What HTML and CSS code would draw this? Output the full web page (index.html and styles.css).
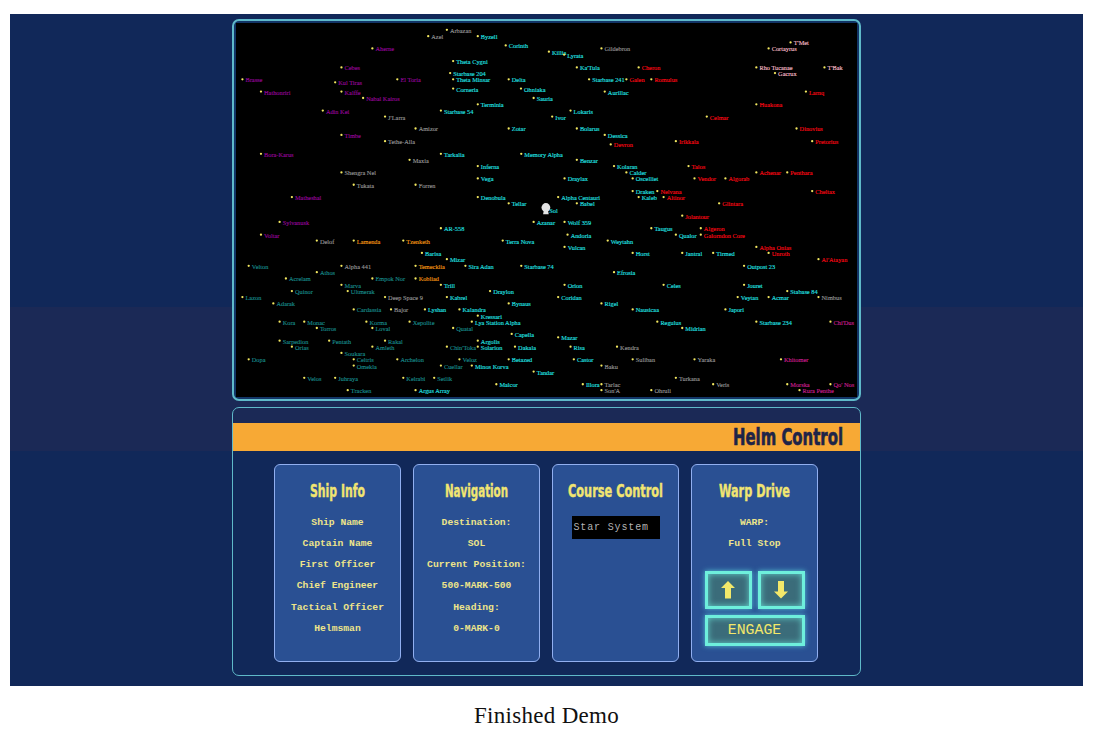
FILE: index.html
```
<!DOCTYPE html>
<html lang="en">
<head>
<meta charset="utf-8">
<title>Helm Control</title>
<link rel="stylesheet" href="styles.css">
</head>
<body>
<figure class="figure">
  <div class="screen">
    <section class="panel panel-map">
      <svg class="map" id="map" viewBox="236 23 622 375"></svg>
    </section>
    <section class="panel panel-helm">
      <header class="bar">
        <svg class="bar-title" width="116" height="28"><text x="3" y="22" textLength="110" lengthAdjust="spacingAndGlyphs">Helm Control</text></svg>
      </header>
      <div class="cards">
        <article class="card">
          <svg class="card-title" width="110" height="28"><text x="27" y="20" textLength="55" lengthAdjust="spacingAndGlyphs">Ship Info</text></svg>
          <p>Ship Name</p><p>Captain Name</p><p>First Officer</p><p>Chief Engineer</p><p>Tactical Officer</p><p>Helmsman</p>
        </article>
        <article class="card">
          <svg class="card-title" width="110" height="28"><text x="23" y="20" textLength="63" lengthAdjust="spacingAndGlyphs">Navigation</text></svg>
          <p>Destination:</p><p>SOL</p><p>Current Position:</p><p>500-MARK-500</p><p>Heading:</p><p>0-MARK-0</p>
        </article>
        <article class="card">
          <svg class="card-title" width="110" height="28"><text x="7" y="20" textLength="95" lengthAdjust="spacingAndGlyphs">Course Control</text></svg>
          <div class="field">Star System</div>
        </article>
        <article class="card">
          <svg class="card-title" width="110" height="28"><text x="19" y="20" textLength="71" lengthAdjust="spacingAndGlyphs">Warp Drive</text></svg>
          <p>WARP:</p><p>Full Stop</p>
          <div class="controls">
            <div class="key"><svg width="14" height="18" viewBox="0 0 14 18"><path d="M7 0L14 7H10V17.5H4V7H0Z"/></svg></div>
            <div class="key"><svg width="14" height="18" viewBox="0 0 14 18"><path d="M7 17.5L14 10.5H10V0H4V10.5H0Z"/></svg></div>
            <div class="key engage">ENGAGE</div>
          </div>
        </article>
      </div>
    </section>
  </div>
  <figcaption class="caption">Finished Demo</figcaption>
</figure>
<script src="map.js"></script>
</body>
</html>
```
FILE: styles.css
```
body { margin: 0; background: #fff; }
.figure { margin: 0; padding: 14px 11px 0 10px; }
.screen {
  box-sizing: border-box; height: 672px; padding-top: 5px;
  display: flex; flex-direction: column; align-items: center; gap: 6px;
  background: linear-gradient(#112859 0 293px, #1b2956 293px 437px, #112859 437px);
}
.panel { box-sizing: border-box; width: 629px; border: 2px solid #5fb9c9; border-radius: 7px; }
.panel-map { height: 382px; padding: 2px; background: #123466; }
.map { display: block; width: 621px; height: 374px; background: #000; }
.map text { font-family: "Liberation Serif", serif; font-size: 6.35px; stroke-width: .12px; }
.dot { fill: #f3e860; }
.c { fill: #22e4e6; stroke: #22e4e6; }
.t { fill: #178c8c; stroke: #178c8c; }
.p { fill: #98059c; stroke: #98059c; }
.r { fill: #ff0814; stroke: #ff0814; }
.g { fill: #979797; stroke: #979797; }
.o { fill: #f79a13; stroke: #f79a13; }
.k { fill: #f8bdca; stroke: #f8bdca; }
.m { fill: #cf1e92; stroke: #cf1e92; }
.ship { fill: #e4e4e4; }
.panel-helm { height: 269px; padding-top: 15px; border-width: 1.5px; }
.bar { height: 28px; background: #f7a935; display: flex; justify-content: flex-end; padding-right: 14px; }
.bar-title text { font: bold 23px "DejaVu Sans Condensed", "DejaVu Sans", sans-serif; fill: #1e2448; stroke: #1e2448; stroke-width: .6px; }
.cards { display: flex; justify-content: center; gap: 12px; padding: 13px 1px 0 0; }
.card {
  box-sizing: border-box; width: 127px; height: 198px; padding-top: 12px;
  display: flex; flex-direction: column; align-items: center;
  background: #2a5093; border: 1.5px solid #91aff0; border-radius: 6px;
  color: #eee58a; font: bold 9.7px/21.15px "Courier New", "Liberation Mono", monospace;
}
.card p { margin: 0; }
.card-title { margin-bottom: 7px; flex: none; overflow: visible; }
.card-title text { font: bold 18.5px "DejaVu Sans Condensed", "DejaVu Sans", sans-serif; fill: #f1e571; stroke: #f1e571; stroke-width: .4px; }
.field {
  box-sizing: border-box; width: 88px; height: 23px; margin-top: 4px; padding-left: 2px;
  background: #000; color: #b4b4b4; font-weight: normal; font-size: 10px; line-height: 24px; letter-spacing: .85px;
}
.controls { display: grid; grid-template-columns: 47px 47px; gap: 6px; margin-top: 17px; }
.key {
  box-sizing: border-box; height: 38px; display: flex; align-items: center; justify-content: center;
  background: #3b6c7a; border: 3.5px solid #6eefdc; box-shadow: 0 0 5px #55c5d4, inset 0 0 6px #62cfc9;
}
.key path { fill: #f3e86a; }
.engage { grid-column: 1 / 3; height: 31px; font-size: 14.8px; font-weight: normal; color: #f3e86a; }
.caption { text-align: center; padding-top: 15px; font: 23px/30px "Liberation Serif", serif; letter-spacing: .3px; color: #111; }
```
FILE: map.js
```
// Star systems: class of the owning faction, then x, y, name
const systems = {
  g: [[428,35.7,"Azel"],[446.7,29.3,"Arbazan"],[601.7,48,"Gildebron"],[384.7,116.3,"J'Larra"],[415.3,128.3,"Amizor"],[384.7,141,"Tethe-Alla"],
    [409.3,159.7,"Maxia"],[341,172.3,"Shengra Nel"],[353.3,184.7,"Tukata"],[415.3,184.7,"Forren"],[316.3,240.7,"Delof"],[341,266,"Alpha 441"],
    [384.7,297.3,"Deep Space 9"],[390.7,309.7,"Bajor"],[617.3,347,"Kendra"],[633,359.7,"Suliban"],[601.7,366,"Baku"],[601.7,384.7,"Tarlac"],
    [601.7,390.7,"Son'A"],[651.7,390.7,"Ohruli"],[819.3,297.3,"Nimbus"],[695,359.7,"Yaraka"],[676.3,378.3,"Turkana"],[713.7,384.7,"Veris"]],
  p: [[372,48,"Aherne"],[341,67,"Cebes"],[241.7,79,"Brasse"],[334.7,82,"Kul Tiras"],[397,79,"El Toria"],[260.3,91.3,"Hathonriri"],[341,91.3,"Kalffe"],
    [362.7,97.7,"Nabal Kairos"],[322.3,110.3,"Adin Kei"],[341,134.7,"Timbe"],[260.3,153.7,"Bora-Karus"],[291.3,197,"Matheshal"],
    [279,222,"Sylvanusk"],[260.3,234.7,"Voltar"]],
  c: [[477.7,35.7,"Byzell"],[505.7,45,"Corinth"],[549,51.3,"Killia"],[564.3,54.3,"Lyrata"],[453,60.7,"Theta Cygni"],[450,72.7,"Starbase 204"],
    [453,79,"Theta Minsar"],[508.7,79,"Delta"],[453,88.3,"Corneria"],[521,88.3,"Ohniaka"],[577,67,"Ka'Tula"],[589.3,79,"Starbase 241"],
    [605,91.3,"Aurillac"],[533.7,97.7,"Sauria"],[477.7,104,"Terminia"],[440.7,110.3,"Starbase 54"],[570.7,110.3,"Lokaris"],[552.3,116.3,"Ivor"],
    [508.7,128.3,"Zotar"],[577,128.3,"Bolarus"],[605,134.7,"Dessica"],[440.7,153.7,"Tarkalia"],[521.3,153.7,"Memory Alpha"],[577,159.7,"Benzar"],
    [477.7,166,"Inferna"],[477.7,178.3,"Vega"],[564.7,178.3,"Draylax"],[614.3,166,"Kolaran"],[626.7,172.3,"Calder"],[633,178.3,"Oscelliet"],
    [477.7,197,"Denobula"],[508.7,203.3,"Tellar"],[558.3,197,"Alpha Centauri"],[577,203.3,"Babel"],[633,191,"Draken"],[639,197,"Kaleb"],
    [546.3,209.6,"Sol"],[533.7,222,"Azanar"],[564.7,222,"Wolf 359"],[567.7,234.7,"Andoria"],[440.7,228.3,"AR-558"],[502.7,240.7,"Terra Nova"],
    [564.7,247,"Vulcan"],[608,240.7,"Weytahn"],[633,253,"Horst"],[421.7,253,"Barisa"],[446.7,259.3,"Mizar"],[465.3,266,"Sira Adan"],
    [521.3,266,"Starbase 74"],[651.7,228.3,"Taugus"],[676.3,234.7,"Qualor"],[682.7,253,"Jantral"],[713.7,253,"Tirmed"],[744.7,266,"Outpost 23"],
    [440.7,285,"Trill"],[424.7,309.7,"Lyshan"],[415.3,390.7,"Argus Array"],[614.3,272.3,"Efrosia"],[564.7,285,"Orion"],[490,291.3,"Draylon"],
    [446.7,297.3,"Kabrel"],[558.3,297.3,"Coridan"],[508.7,303.7,"Bynaus"],[601.7,303.7,"Rigel"],[459.3,309.7,"Kalandra"],[633,309.7,"Nausicaa"],
    [477.7,316,"Kressari"],[471.7,322,"Lya Station Alpha"],[511.7,334.3,"Capella"],[558.3,337.7,"Mazar"],[477.7,341,"Argolis"],
    [477.7,347,"Solarion"],[515,347,"Dakala"],[570.7,347,"Risa"],[508.7,359.7,"Betazed"],[574,359.7,"Castor"],[471.7,366,"Minos Korva"],
    [533.7,372,"Tandar"],[496.3,384.7,"Malcor"],[583,384.7,"Illora"],[664,285,"Celes"],[744.7,285,"Jouret"],[788,291.3,"Stabase 84"],
    [738.3,297.3,"Veytan"],[769.3,297.3,"Acmar"],[726,309.7,"Japori"],[657.7,322,"Regulus"],[757,322,"Starbase 234"],[682.7,328.3,"Midrian"]],
  r: [[639,67,"Cheron"],[626.7,79,"Galen"],[651.7,79,"Romulus"],[806.7,91.3,"Larnq"],[757,104,"Huakona"],[707.3,116.3,"Celmar"],
    [797.3,128.3,"Dinovius"],[676.3,141,"Irikkala"],[813,141,"Pretorius"],[611,144.3,"Devron"],[689,166,"Talos"],[695,178.3,"Vendor"],
    [726,178.3,"Algorab"],[757,172.3,"Achenar"],[788,172.3,"Penthara"],[657.7,191,"Nelvana"],[664,197,"Altinor"],[813,191,"Cheltax"],
    [719.7,203.3,"Glintara"],[682.7,215.7,"Jolantour"],[701.3,228.3,"Algeron"],[701.3,234.7,"Galorndon Core"],[757,247,"Alpha Onias"],
    [769.3,253,"Unroth"],[819.3,259.3,"Al'Atayan"]],
  k: [[791.3,42,"T'Met"],[769.3,48,"Cortayrus"],[757,67,"Rho Tucanae"],[775.7,72.7,"Gacrux"],[825.3,67,"T'Bak"]],
  o: [[353.3,240.7,"Lamenda"],[403,240.7,"Tzenketh"],[415.3,266,"Temecklia"],[415.3,278.7,"Kobliad"]],
  t: [[248,266,"Velton"],[316.3,272.3,"Athos"],[285.3,278.7,"Acrelam"],[372,278.7,"Empok Nor"],[341,285,"Marva"],[291.3,291.3,"Quinor"],
    [347.3,291.3,"Ultmerak"],[241.7,297.3,"Lazon"],[272.7,303.7,"Adarak"],[353.3,309.7,"Cardassia"],[279,322,"Kora"],[303.7,322,"Monac"],
    [366,322,"Korma"],[409.3,322,"Xepolite"],[316.3,328.3,"Torros"],[372,328.3,"Loval"],[279,341,"Sarpedion"],[328.7,341,"Pentath"],
    [384.7,341,"Rakal"],[291.3,347,"Orias"],[372,347,"Amleth"],[341,353.3,"Soukara"],[353.3,359.7,"Celtris"],[248,359.7,"Dopa"],
    [397,359.7,"Archelon"],[353.3,366,"Omekla"],[440.7,366,"Cuellar"],[303.7,378.3,"Velos"],[334.7,378.3,"Juhraya"],[403,378.3,"Kelrabi"],
    [434,378.3,"Setlik"],[347.3,390.7,"Tracken"],[453,328.3,"Quatal"],[446.7,347,"Chin'Toka"],[459.3,359.7,"Veloz"]],
  m: [[831.3,322,"Chi'Dus"],[781.7,359.7,"Khitomer"],[788,384.7,"Morska"],[831.3,384.7,"Qo' Nos"],[800.3,390.7,"Rura Penthe"]]
};
let out = "";
for (const [faction, list] of Object.entries(systems))
  for (const [x, y, name] of list)
    out += `<circle class="dot" cx="${x + 0.4}" cy="${y + 0.5}" r="1.15"/><text class="${faction}" x="${x + 3.5}" y="${y + 3.5}">${name}</text>`;
out += '<g class="ship"><circle cx="546.4" cy="208" r="4.4"/><path d="M544.4 210h4l.8 4.8h-5.6z"/></g>';
document.getElementById("map").innerHTML = out;
```
